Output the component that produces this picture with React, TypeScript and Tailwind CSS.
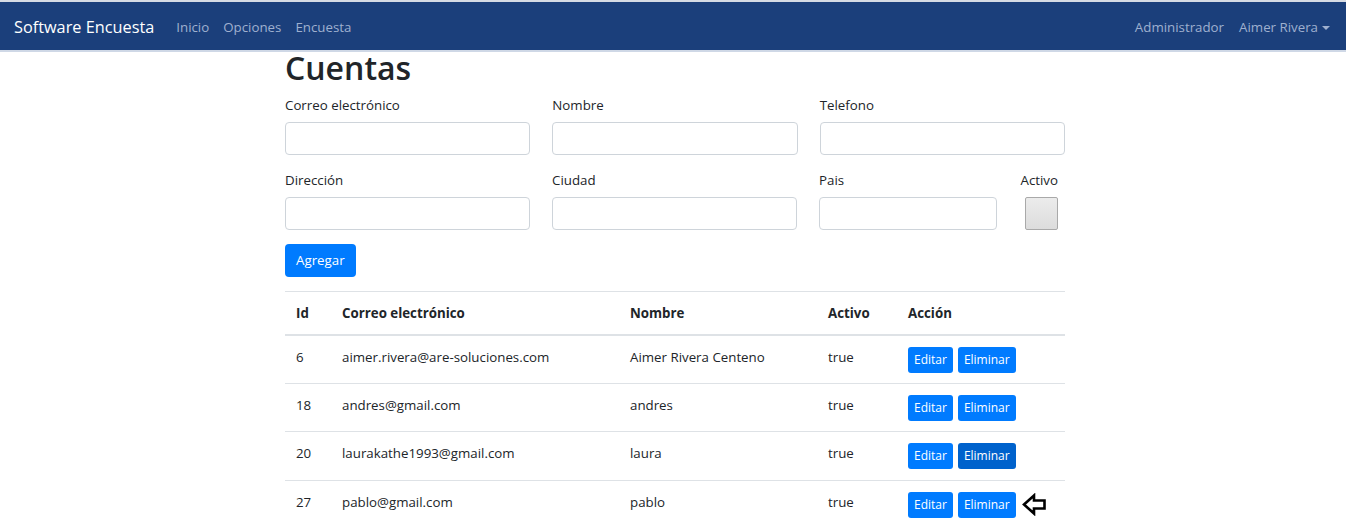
import { useState } from 'react';

interface Cuenta {
  id: number;
  correo: string;
  nombre: string;
  activo: boolean;
}

const cuentas: Cuenta[] = [
  { id: 6, correo: 'aimer.rivera@are-soluciones.com', nombre: 'Aimer Rivera Centeno', activo: true },
  { id: 18, correo: 'andres@gmail.com', nombre: 'andres', activo: true },
  { id: 20, correo: 'laurakathe1993@gmail.com', nombre: 'laura', activo: true },
  { id: 27, correo: 'pablo@gmail.com', nombre: 'pablo', activo: true },
];

const font = { fontFamily: '"Open Sans", "Noto Sans", sans-serif' };

function Campo({ label, className = '' }: { label: string; className?: string }) {
  return (
    <div className={`flex flex-col ${className}`}>
      <label className="text-[13.3px] text-[#212529] leading-[21px] h-[21px]">{label}</label>
      <input
        type="text"
        className="mt-[6px] h-[33px] rounded-[4px] border border-[#ced4da] bg-white px-3 text-[13.3px] outline-none"
      />
    </div>
  );
}

export default function App() {
  const [activo, setActivo] = useState(false);

  return (
    <div className="min-h-[527px] bg-white text-[#212529]" style={font}>
      {/* barra de navegacion */}
      <nav className="h-[52px] border-t-2 border-[#d6dbe4] bg-[#1b3f7b] border-b-2 border-b-[#cfd8e6] flex items-center px-[14px] pt-[3px]">
        <span className="text-[16.3px] text-white mr-[22px] -mt-[1px]">Software Encuesta</span>
        <div className="flex gap-[14px] text-[13.3px] text-[#9fb0cf]">
          <span>Inicio</span>
          <span>Opciones</span>
          <span>Encuesta</span>
        </div>
        <div className="ml-auto flex items-center gap-[15px] text-[13.3px] text-[#9fb0cf] mr-[2px]">
          <span>Administrador</span>
          <span className="flex items-center gap-[4px]">
            Aimer Rivera
            <span className="inline-block w-0 h-0 border-l-[4px] border-r-[4px] border-t-[4px] border-l-transparent border-r-transparent border-t-[#9fb0cf]" />
          </span>
        </div>
      </nav>

      <main className="w-[780px] ml-[285px]">
        <h1 className="text-[32px] font-semibold leading-[35px] mt-[-2px] text-[#212529]">Cuentas</h1>

        {/* formulario */}
        <div className="grid grid-cols-3 gap-x-[22px] mt-[10px]">
          <Campo label="Correo electrónico" />
          <Campo label="Nombre" />
          <Campo label="Telefono" />
        </div>
        <div className="flex gap-[22px] mt-[15px]">
          <Campo label="Dirección" className="w-[245px]" />
          <Campo label="Ciudad" className="w-[245px]" />
          <Campo label="Pais" className="w-[178px]" />
          <div className="flex flex-col items-end ml-auto mr-[7px]">
            <label className="text-[13.3px] leading-[21px] h-[21px]">Activo</label>
            <button
              onClick={() => setActivo(!activo)}
              className="mt-[6px] w-[33px] h-[33px] rounded-[2px] border border-[#a9a9a9] bg-gradient-to-b from-[#ececec] to-[#dcdcdc] flex items-center justify-center text-[#333]"
            >
              {activo ? '✓' : ''}
            </button>
          </div>
        </div>

        <button className="mt-[14px] h-[33px] px-[11px] rounded-[4px] bg-[#007bff] text-white text-[13.3px]">
          Agregar
        </button>

        {/* tabla de cuentas */}
        <table className="w-full mt-[14px] border-collapse text-[13.3px]">
          <thead>
            <tr className="border-t border-[#dee2e6] border-b-2 border-b-[#dee2e6]">
              <th className="w-[46px] text-left font-bold px-[11px] h-[43px] pt-[2px]">Id</th>
              <th className="w-[288px] text-left font-bold px-[11px] pt-[2px]">Correo electrónico</th>
              <th className="w-[198px] text-left font-bold px-[11px] pt-[2px]">Nombre</th>
              <th className="w-[80px] text-left font-bold px-[11px] pt-[2px]">Activo</th>
              <th className="text-left font-bold px-[11px] pt-[2px]">Acción</th>
            </tr>
          </thead>
          <tbody>
            {cuentas.map((c, idx) => (
              <tr key={c.id} className="border-b border-[#dee2e6] last:border-b-0 h-[48.5px]">
                <td className="px-[11px] align-top pt-[12px]">{c.id}</td>
                <td className="px-[11px] align-top pt-[12px]">{c.correo}</td>
                <td className="px-[11px] align-top pt-[12px]">{c.nombre}</td>
                <td className="px-[11px] align-top pt-[12px]">{c.activo ? 'true' : 'false'}</td>
                <td className="px-[11px] align-top pt-[11px]">
                  <div className="flex items-center gap-[5px]">
                    <button className="h-[26px] px-[6px] rounded-[3px] bg-[#007bff] text-white text-[12px]">Editar</button>
                    <button
                      className={`h-[26px] px-[6px] rounded-[3px] text-white text-[12px] ${
                        idx === 2 ? 'bg-[#0062cc]' : 'bg-[#007bff]'
                      }`}
                    >
                      Eliminar
                    </button>
                    {idx === 3 && (
                      <svg width="25" height="23" viewBox="0 0 25 23" className="ml-[1px]">
                        <path d="M2 11.5 L12 2.5 L12 7.5 L22.5 7.5 L22.5 15.5 L12 15.5 L12 20.5 Z" fill="white" stroke="black" strokeWidth="2.6" strokeLinejoin="miter" />
                      </svg>
                    )}
                  </div>
                </td>
              </tr>
            ))}
          </tbody>
        </table>
      </main>
    </div>
  );
}
